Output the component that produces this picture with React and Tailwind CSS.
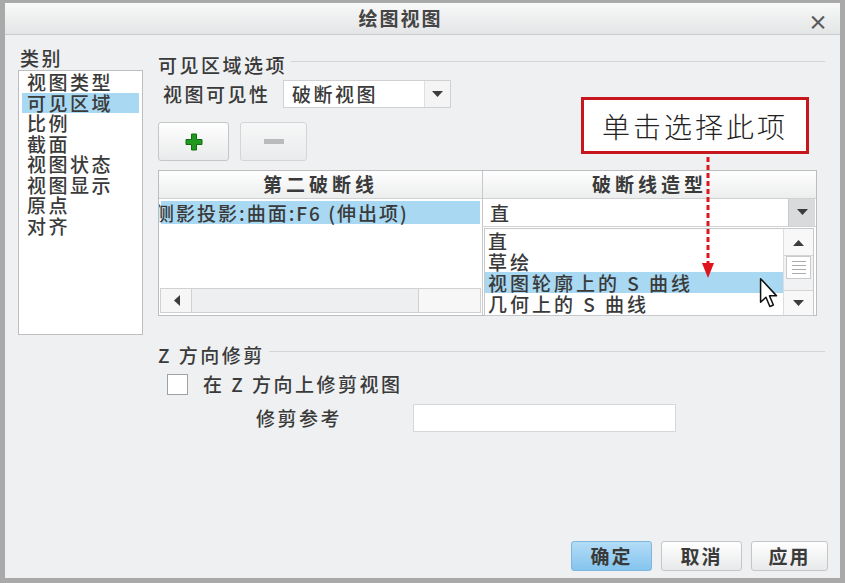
import React from 'react';

const categories = ['视图类型', '可见区域', '比例', '截面', '视图状态', '视图显示', '原点', '对齐'];
const shapes = ['直', '草绘', '视图轮廓上的 S 曲线', '几何上的 S 曲线'];

const ArrowDown = ({ className = '' }) => (
  <svg width="11" height="7" viewBox="0 0 11 7" className={className}>
    <path d="M0 0 L11 0 L5.5 6 Z" fill="#3c3c3c" />
  </svg>
);

const ArrowUp = () => (
  <svg width="11" height="7" viewBox="0 0 11 7">
    <path d="M0 7 L11 7 L5.5 1 Z" fill="#3c3c3c" />
  </svg>
);

const SectionTitle = ({ children }) => (
  <div className="flex items-start h-[20px]">
    <span className="leading-[20px] whitespace-nowrap">{children}</span>
    <div className="flex-1 ml-[4px] mt-[6px] border-t border-[#d2d4d6]" />
  </div>
);

export default function App() {
  return (
    <div className="relative w-[845px] h-[583px] overflow-hidden bg-[#a9a9a9] pt-[3px] px-[5px] pb-[5px] font-['Noto_Sans_CJK_SC','Liberation_Sans',sans-serif] text-[#3a3a3a]">
      <div className="flex flex-col h-full bg-[#eef0f1]">
        {/* Title bar */}
        <div className="relative h-[32px] shrink-0 flex items-center justify-center border-b border-[#c9cbcd] bg-gradient-to-b from-[#f8f9f9] to-[#e3e5e6]">
          <span className="pr-[44px] text-[19px] font-bold tracking-[2px] text-[#454545]">绘图视图</span>
          <span className="absolute right-[12px] top-[4px] text-[20px] font-bold text-[#5a5a5a]">×</span>
        </div>

        {/* Body */}
        <div className="flex-1 flex flex-col">
          <div className="flex pt-[12px] text-[19px] leading-[20.5px] tracking-[2.5px] font-medium">
            {/* Category list */}
            <div className="w-[125px] ml-[13px] flex flex-col">
              <div className="h-[23px] pl-[2px] leading-[22px]">类别</div>
              <div className="h-[265px] bg-white border border-[#bcbec0] pt-[1px] px-[3px]">
                {categories.map((c) => (
                  <div key={c} className={`pl-[5px] h-[20.5px] ${c === '可见区域' ? 'bg-[#a8d8f2]' : ''}`}>
                    {c}
                  </div>
                ))}
              </div>
            </div>

            {/* Right panel */}
            <div className="ml-[15px] w-[667px] flex flex-col pt-[8px]">
              <SectionTitle>可见区域选项</SectionTitle>

              <div className="flex items-center mt-[5px] h-[28px] pl-[5px]">
                <span className="w-[120px]">视图可见性</span>
                <div className="flex h-[28px] w-[168px] bg-white border border-[#cfd1d3]">
                  <span className="flex-1 pl-[8px] leading-[26px]">破断视图</span>
                  <div className="w-[26px] flex items-center justify-center border-l border-[#dedfe0] bg-[#f4f4f4]">
                    <ArrowDown />
                  </div>
                </div>
              </div>

              <div className="flex mt-[14px] gap-[11px]">
                <div className="w-[71px] h-[39px] rounded-[3px] border border-[#c4c6c8] bg-gradient-to-b from-white to-[#e9eaeb] flex items-center justify-center">
                  <svg width="18" height="18" viewBox="0 0 18 18">
                    <path d="M6.5 1 H11.5 V6.5 H17 V11.5 H11.5 V17 H6.5 V11.5 H1 V6.5 H6.5 Z" fill="#1f9a1f" stroke="#136b13" strokeWidth="1" />
                  </svg>
                </div>
                <div className="w-[67px] h-[39px] rounded-[3px] border border-[#d3d5d7] bg-gradient-to-b from-[#f6f7f7] to-[#eaebec] flex items-center justify-center">
                  <div className="w-[20px] h-[5px] bg-[#b9bbbd]" />
                </div>
              </div>

              {/* Table */}
              <div className="relative mt-[9px] w-[659px] h-[146px] border border-[#bbbdbf] bg-white flex">
                <div className="w-[324px] flex flex-col border-r border-[#c6c8ca]">
                  <div className="h-[28px] flex items-center justify-center border-b border-[#cfd1d3] bg-gradient-to-b from-white to-[#eceded] font-bold tracking-[4px]">
                    第二破断线
                  </div>
                  <div className="h-[27px] overflow-hidden px-[2px] pt-[2px]">
                    <div className="h-[23px] bg-[#a8d8f2] whitespace-nowrap leading-[23px] -indent-[6px] tracking-[2px]">
                      侧影投影:曲面:F6 (伸出项)
                    </div>
                  </div>
                  <div className="flex-1" />
                  <div className="h-[25px] mb-[2px] mx-[1px] flex border border-[#cfd1d3] bg-[#eeeff0]">
                    <div className="w-[31px] flex items-center justify-center border-r border-[#cfd1d3] bg-[#f6f6f6]">
                      <svg width="7" height="11" viewBox="0 0 7 11">
                        <path d="M7 0 V11 L1 5.5 Z" fill="#3c3c3c" />
                      </svg>
                    </div>
                    <div className="flex-1" />
                    <div className="w-[62px] border-l border-[#cfd1d3] bg-[#f7f7f7]" />
                  </div>
                </div>
                <div className="flex-1 flex flex-col">
                  <div className="h-[28px] flex items-center justify-center border-b border-[#cfd1d3] bg-gradient-to-b from-white to-[#eceded] font-bold tracking-[4px]">
                    破断线造型
                  </div>
                  <div className="h-[28px] flex border-b border-[#cfd1d3]">
                    <span className="flex-1 pl-[7px] leading-[28px]">直</span>
                    <div className="w-[27px] mr-[1px] flex items-center justify-center bg-[#d9dadb] border-l border-[#c6c8ca]">
                      <ArrowDown />
                    </div>
                  </div>
                </div>

                {/* Dropdown list */}
                <div className="absolute left-[325px] top-[57px] w-[330px] h-[88px] bg-white border border-[#c6c8ca] flex">
                  <div className="flex-1 pt-[1px]">
                    {shapes.map((s, i) => (
                      <div key={s} className={`h-[21px] pl-[3px] leading-[21px] whitespace-nowrap tracking-[3px] ${i === 2 ? 'bg-[#a8d8f2]' : ''}`}>
                        {s}
                      </div>
                    ))}
                  </div>
                  <div className="w-[30px] flex flex-col border-l border-[#dcdddf] bg-[#f1f2f3]">
                    <div className="h-[27px] flex items-center justify-center border-b border-[#d3d5d7] bg-[#f8f8f8]">
                      <ArrowUp />
                    </div>
                    <div className="h-[23px] mx-[2px] flex flex-col items-center justify-center gap-[3px] border border-[#c8cacc] bg-white">
                      <div className="w-[14px] border-t border-[#a9abad]" />
                      <div className="w-[14px] border-t border-[#a9abad]" />
                      <div className="w-[14px] border-t border-[#a9abad]" />
                      <div className="w-[14px] border-t border-[#a9abad]" />
                    </div>
                    <div className="flex-1" />
                    <div className="h-[25px] flex items-center justify-center border-t border-[#d3d5d7] bg-[#f8f8f8]">
                      <ArrowDown />
                    </div>
                  </div>
                </div>
              </div>

              <div className="mt-[29px]">
                <SectionTitle>Z 方向修剪</SectionTitle>
              </div>

              <div className="flex items-center mt-[9px] h-[21px] pl-[9px]">
                <div className="w-[21px] h-[21px] bg-white border border-[#9fa1a3]" />
                <span className="ml-[15px]">在 Z 方向上修剪视图</span>
              </div>

              <div className="flex items-center mt-[9px] h-[28px] pl-[98px]">
                <span className="w-[157px]">修剪参考</span>
                <div className="w-[263px] h-[28px] bg-white border border-[#d5d7d9]" />
              </div>
            </div>
          </div>

          {/* Bottom buttons */}
          <div className="mt-auto flex justify-end gap-[9px] pr-[12px] pb-[7px] text-[19px] font-bold tracking-[2px]">
            <div className="w-[81px] h-[30px] rounded-[3px] border border-[#7fb6dc] bg-gradient-to-b from-[#b3dcf6] to-[#84c4ee] flex items-center justify-center">确定</div>
            <div className="w-[81px] h-[30px] rounded-[3px] border border-[#c4c6c8] bg-gradient-to-b from-white to-[#e8e9ea] flex items-center justify-center">取消</div>
            <div className="w-[77px] h-[30px] rounded-[3px] border border-[#c4c6c8] bg-gradient-to-b from-white to-[#e8e9ea] flex items-center justify-center">应用</div>
          </div>
        </div>
      </div>

      {/* Annotation callout */}
      <div className="absolute left-[581px] top-[97px] w-[228px] h-[57px] border-[3px] border-[#c8161e] bg-white flex items-center justify-center text-[28px] font-light tracking-[3px] text-[#222]">
        单击选择此项
      </div>
      <svg className="absolute left-[700px] top-[157px]" width="16" height="125" viewBox="0 0 16 125">
        <line x1="8" y1="0" x2="8" y2="108" stroke="#e0141c" strokeWidth="3" strokeDasharray="5 3" />
        <path d="M2 106 L14 106 L8 121 Z" fill="#e0141c" />
      </svg>

      {/* Mouse cursor */}
      <svg className="absolute left-[757px] top-[277px]" width="24" height="32" viewBox="0 0 12 19">
        <path d="M1 1 L1 15 L4.2 12 L6.5 17.5 L8.6 16.6 L6.3 11.2 L10.5 11.2 Z" fill="white" stroke="#111" strokeWidth="0.9" strokeLinejoin="round" />
      </svg>
    </div>
  );
}
